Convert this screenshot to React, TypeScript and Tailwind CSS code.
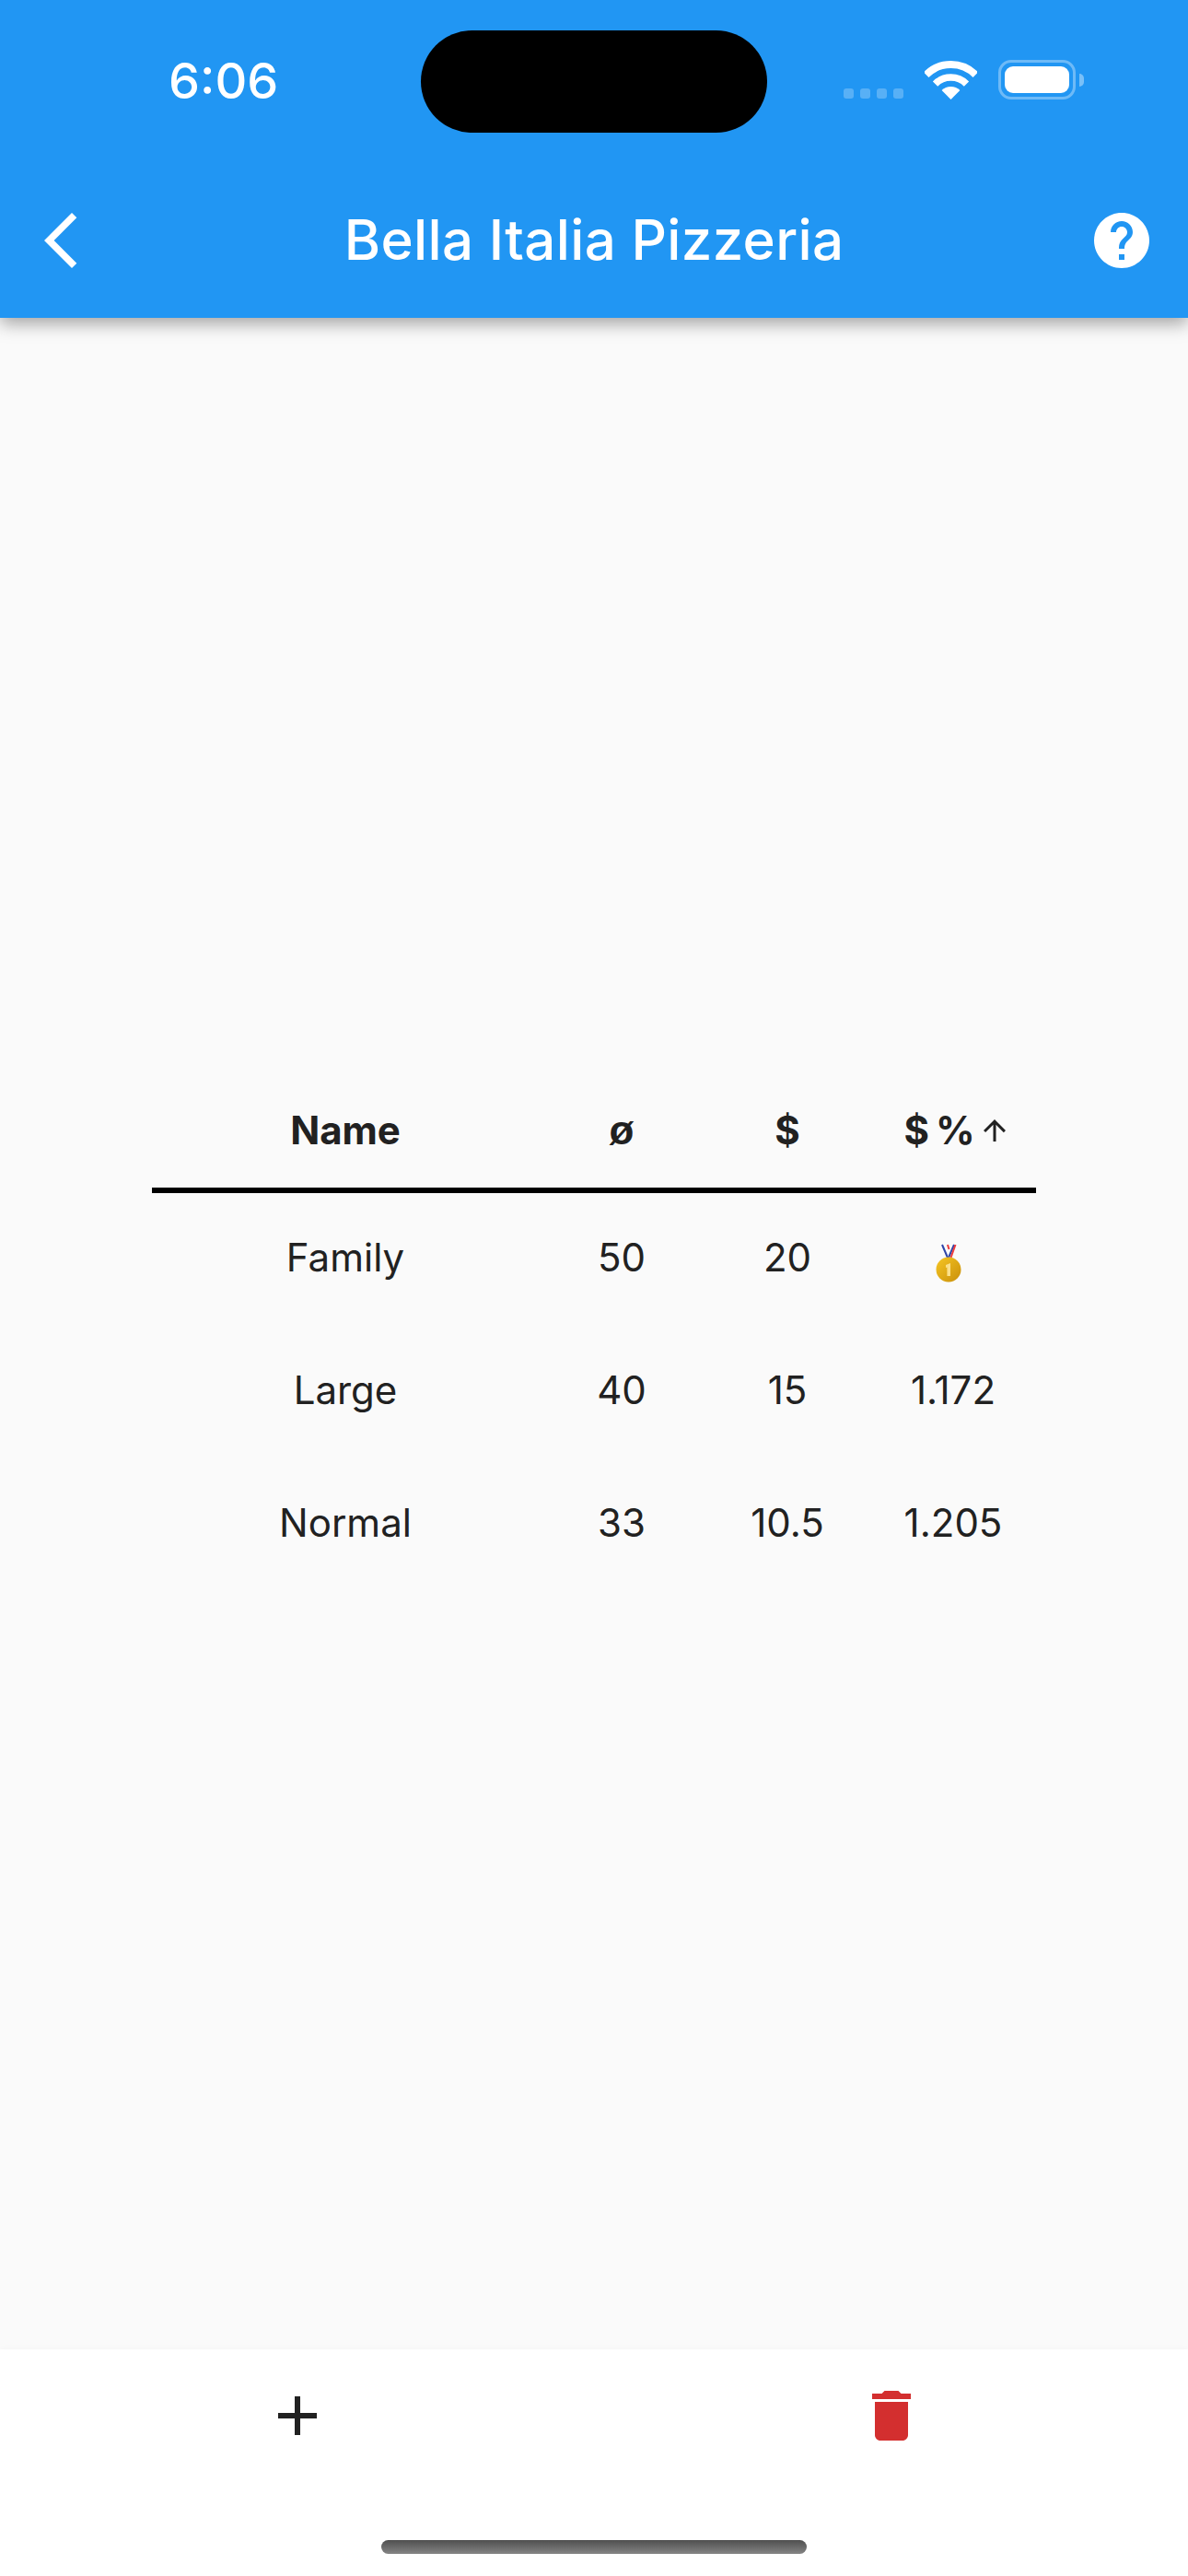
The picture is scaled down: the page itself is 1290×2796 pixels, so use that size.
import { MdAdd, MdArrowBackIosNew, MdArrowUpward, MdDelete, MdHelp } from 'react-icons/md'

const ROWS = [
  { name: 'Family', size: '50', price: '20', ratio: null },
  { name: 'Large', size: '40', price: '15', ratio: '1.172' },
  { name: 'Normal', size: '33', price: '10.5', ratio: '1.205' },
]

function Wifi() {
  return (
    <svg width="57" height="42" viewBox="0 0 57 42" fill="none">
      <path d="M1.63 15.13A38 38 0 0 1 55.37 15.13" stroke="#fff" strokeWidth="8" />
      <path d="M11.53 25.03A24 24 0 0 1 45.47 25.03" stroke="#fff" strokeWidth="7.5" />
      <path d="M28.5 42L18.6 32.1A14 14 0 0 1 38.4 32.1Z" fill="#fff" />
    </svg>
  )
}

function Medal() {
  return (
    <svg width="28" height="42" viewBox="0 0 28 42" className="mt-[12px] mr-[10px]">
      <defs>
        <linearGradient id="gold" x1="0" y1="0" x2="1" y2="1">
          <stop offset="0" stopColor="#f6c624" />
          <stop offset="1" stopColor="#c98f0a" />
        </linearGradient>
      </defs>
      <path d="M7 1l6 14" stroke="#2f45a8" strokeWidth="2" fill="none" />
      <path d="M20 1l-6 14" stroke="#2f45a8" strokeWidth="2" fill="none" />
      <path d="M21.5 1l-5 14" stroke="#ee3b3b" strokeWidth="2" fill="none" />
      <path d="M13 1l1.5 5" stroke="#ee3b3b" strokeWidth="2" fill="none" />
      <circle cx="14" cy="28" r="13.5" fill="url(#gold)" />
      <path d="M11 23l5-2v14h-3.6v-9.5l-1.4.5z" fill="#fbe08a" />
    </svg>
  )
}

export default function App() {
  return (
    <div className="flex h-[2796px] w-[1290px] flex-col bg-[#fafafa] font-['Inter',sans-serif] text-[#212121]">
      {/* App bar */}
      <header className="z-10 bg-[#2196f3] text-white shadow-[0_6px_18px_rgba(0,0,0,0.36)]">
        <div className="flex h-[177px] items-start pt-[33px]">
          <div className="flex h-[111px] w-[457px] items-center pb-[2px] pl-[183px] text-[54px] leading-none font-medium">6:06</div>
          <div className="h-[111px] w-[376px] rounded-full bg-black" />
          <div className="mt-[32px] ml-[83px] flex items-end gap-[23px]">
            <div className="flex gap-[7px] pb-[1px]">
              {[0, 1, 2, 3].map(i => (
                <span key={i} className="h-[11px] w-[11px] rounded-[3px] bg-white/25" />
              ))}
            </div>
            <Wifi />
            <div className="flex items-center gap-[4px]">
              <div className="h-[43px] w-[84px] rounded-[14px] border-[3px] border-white/35 p-[4px]">
                <div className="h-full w-full rounded-[9px] bg-white" />
              </div>
              <div className="h-[14px] w-[5px] rounded-r-full bg-white/40" />
            </div>
          </div>
        </div>
        <div className="flex h-[168px] items-center">
          <div className="flex w-[150px] pl-[30px]">
            <MdArrowBackIosNew size={72} />
          </div>
          <h1 className="flex-1 pb-[2px] text-center text-[60px] leading-none font-medium tracking-[0.35px]">Bella Italia Pizzeria</h1>
          <div className="flex w-[150px] justify-end pr-[36px]">
            <MdHelp size={72} />
          </div>
        </div>
      </header>

      {/* Table */}
      <main className="flex flex-1 flex-col items-center justify-center">
        <div className="w-[960px] text-[42px] leading-none">
          <div className="grid h-[126px] grid-cols-[420px_180px_180px_180px] items-center border-b-[6px] border-black pb-[3px] text-center font-bold">
            <span>Name</span>
            <span className="font-['Liberation_Sans',sans-serif] text-[44px]">ø</span>
            <span>$</span>
            <span className="flex items-center justify-center pl-[9px]">
              <span>$</span>
              <span className="ml-[7px]">%</span>
              <MdArrowUpward size={36} className="ml-[3px]" />
            </span>
          </div>
          {ROWS.map(row => (
            <div key={row.name} className="grid h-[144px] grid-cols-[420px_180px_180px_180px] items-center pb-[3px] text-center">
              <span>{row.name}</span>
              <span>{row.size}</span>
              <span>{row.price}</span>
              {row.ratio ? (
                <span>{row.ratio}</span>
              ) : (
                <span className="flex justify-center">
                  <Medal />
                </span>
              )}
            </div>
          ))}
        </div>
      </main>

      {/* Bottom bar */}
      <footer className="flex h-[246px] flex-col items-center bg-white shadow-[0_-2px_6px_rgba(0,0,0,0.02)]">
        <div className="grid h-[144px] w-full grid-cols-2 items-center justify-items-center">
          <MdAdd size={72} />
          <MdDelete size={72} className="text-[#d32f2f]" />
        </div>
        <div className="mt-[63px] h-[15px] w-[462px] rounded-full bg-gradient-to-b from-[#4f4f4f] to-[#858585]" />
      </footer>
    </div>
  )
}
